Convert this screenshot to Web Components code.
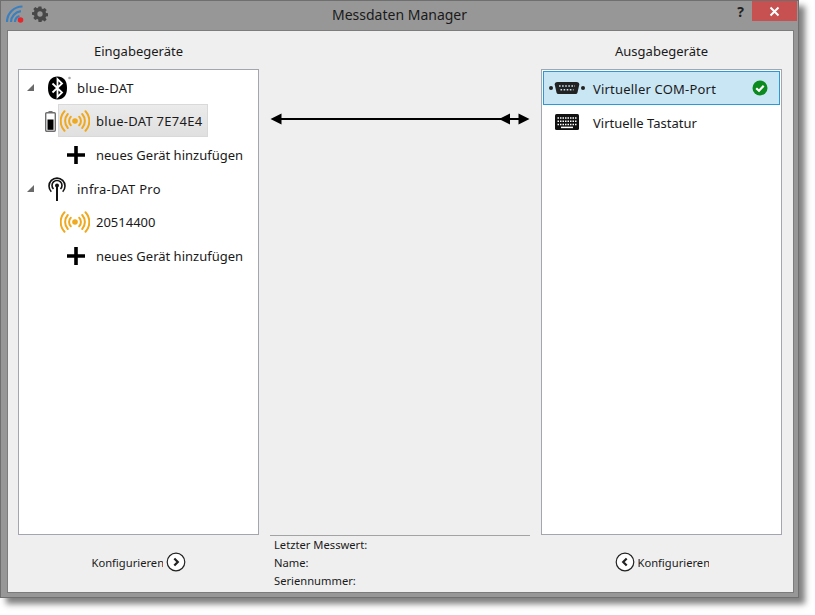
<!DOCTYPE html>
<html lang="de">
<head>
<meta charset="utf-8">
<title>Messdaten Manager</title>
<style>
  html, body { margin: 0; background: #fff; min-height: 615px; }
  body { font: 13px "Noto Sans", "Open Sans", sans-serif; color: #1a1a1a; }
</style>
</head>
<body>
<app-window caption="Messdaten Manager">
  <ui-icon slot="app" name="signal" size="18"></ui-icon>
  <ui-icon slot="app" name="gear" size="16"></ui-icon>

  <device-panel slot="left" heading="Eingabegeräte">
    <tree-row kind="group"><ui-icon slot="icon" name="bluetooth" size="24"></ui-icon>blue-DAT</tree-row>
    <tree-row kind="device" selected><ui-icon slot="lead" name="battery" size="11"></ui-icon><ui-icon slot="icon" name="wifi" size="30"></ui-icon>blue-DAT 7E74E4</tree-row>
    <tree-row kind="add"><ui-icon slot="icon" name="plus" size="18"></ui-icon>neues Gerät hinzufügen</tree-row>
    <tree-row kind="group"><ui-icon slot="icon" name="antenna" size="18"></ui-icon>infra-DAT Pro</tree-row>
    <tree-row kind="device"><ui-icon slot="icon" name="wifi" size="30"></ui-icon>20514400</tree-row>
    <tree-row kind="add"><ui-icon slot="icon" name="plus" size="18"></ui-icon>neues Gerät hinzufügen</tree-row>
    <config-link slot="footer" dir="next">Konfigurieren</config-link>
  </device-panel>

  <link-area slot="middle"></link-area>

  <device-panel slot="right" heading="Ausgabegeräte">
    <output-row selected><ui-icon slot="icon" name="serial" size="36"></ui-icon>Virtueller COM-Port<ui-icon slot="status" name="check" size="16"></ui-icon></output-row>
    <output-row><ui-icon slot="icon" name="keyboard" size="26"></ui-icon>Virtuelle Tastatur</output-row>
    <config-link slot="footer" dir="prev">Konfigurieren</config-link>
  </device-panel>
</app-window>

<script>
const ICONS = {
  signal: `<svg viewBox="0 0 18 18" fill="none" stroke="#3a80bf" stroke-width="2.200"><path d="M1 17A15.500 15.500 0 0 1 16.500 1.500"/><path d="M5 17A11 11 0 0 1 15 6.200"/><path d="M9 17A6.500 6.500 0 0 1 13.500 11"/><circle cx="14.500" cy="15" r="2.800" fill="#e8262a" stroke="none"/></svg>`,
  gear: `<svg viewBox="0 0 18 18"><path fill="#484848" fill-rule="evenodd" d="M7.400 .6h3.200l.4 2.300 1.300.6 2-1.300 2.200 2.200-1.300 2 .6 1.400 2.300.4v3.200l-2.300.4-.6 1.300 1.300 2-2.200 2.200-2-1.300-1.300.6-.4 2.300H7.400L7 15.100l-1.300-.6-2 1.300-2.200-2.200 1.300-2-.6-1.300-2.300-.4V7.100l2.300-.4.6-1.400-1.300-2 2.200-2.200 2 1.300 1.300-.6zM9 6a3 3 0 1 0 0 6 3 3 0 0 0 0-6z"/></svg>`,
  bluetooth: `<svg viewBox="0 0 24 24"><path fill="#000" d="M9.500 .5c6 0 9.500 4 9.500 11.500s-3.500 11.500-9.500 11.500S0 19.500 0 12 3.500 .5 9.500 .5z"/><path fill="none" stroke="#fff" stroke-width="1.800" d="M4.500 7.500l9.500 9-4.500 4.300V3.200l4.500 4.300-9.500 9"/><circle cx="21.500" cy="2" r="1.300" fill="#aaa"/></svg>`,
  battery: `<svg viewBox="0 0 11 21"><rect x="3.500" y="0" width="4" height="2" fill="#777"/><rect x=".7" y="1.700" width="9.600" height="18.600" rx="1" fill="#fff" stroke="#6e6e6e" stroke-width="1.400"/><rect x="2.500" y="8.500" width="6" height="10.300" fill="#000"/></svg>`,
  wifi: `<svg viewBox="0 0 30 22" fill="none" stroke="#f0a81c" stroke-width="2" stroke-linecap="round"><circle cx="15" cy="11" r="2.800" fill="#f0a81c" stroke="none"/><path d="M10.800 6.800a6 6 0 0 0 0 8.400M19.200 6.800a6 6 0 0 1 0 8.400"/><path d="M7.800 4a10.500 10.500 0 0 0 0 14M22.200 4a10.500 10.500 0 0 1 0 14"/><path d="M4.500 1.200a14.500 14.500 0 0 0 0 19.600M25.500 1.200a14.500 14.500 0 0 1 0 19.600"/></svg>`,
  plus: `<svg viewBox="0 0 18 18"><path fill="#000" d="M7.200 0h3.600v7.200H18v3.600h-7.200V18H7.200v-7.200H0V7.200h7.200z"/></svg>`,
  antenna: `<svg viewBox="0 0 18 24" fill="none" stroke="#111" stroke-width="1.600"><path d="M3.300 14.700a8 8 0 1 1 11.400 0"/><path d="M5.500 12a5 5 0 1 1 7 0"/><circle cx="9" cy="8.500" r="2" fill="#111" stroke="none"/><path d="M9 9V24" stroke-width="2"/></svg>`,
  serial: `<svg viewBox="0 0 36 14"><circle cx="2" cy="7" r="2" fill="#222"/><circle cx="34" cy="7" r="2" fill="#222"/><path fill="#222" d="M8.500 1h19c2 0 2.800 1 2.800 2.500L28.500 11.500c-.4 1.100-1 1.500-2.300 1.500H9.800c-1.300 0-1.900-.4-2.300-1.500L5.700 3.500C5.700 2 6.500 1 8.500 1z"/><path stroke="#c9e6f5" stroke-width="1.600" stroke-dasharray="1.600 1.500" d="M10 5h16M11.500 8.800h13"/></svg>`,
  keyboard: `<svg viewBox="0 0 26 18"><rect x="1" y="1" width="24" height="16" rx="1.500" fill="#111"/><path stroke="#fff" stroke-width="1.500" stroke-dasharray="1.500 1" d="M3.500 5h19M3.500 8.200h19M3.500 11.400h19"/><path stroke="#fff" stroke-width="1.500" d="M7 14.400h12"/></svg>`,
  check: `<svg viewBox="0 0 16 16"><circle cx="8" cy="8" r="7.500" fill="#0b8a1e"/><path fill="none" stroke="#fff" stroke-width="2.200" d="M4.200 8.200l2.800 2.600 4.700-5"/></svg>`,
  next: `<svg viewBox="0 0 20 20"><circle cx="10" cy="10" r="8.800" fill="#fff" stroke="#222" stroke-width="1.200"/><path fill="none" stroke="#222" stroke-width="2.200" d="M8.300 6.500L11.800 10l-3.500 3.500"/></svg>`,
  prev: `<svg viewBox="0 0 20 20"><circle cx="10" cy="10" r="8.800" fill="#fff" stroke="#222" stroke-width="1.200"/><path fill="none" stroke="#222" stroke-width="2.200" d="M11.700 6.500L8.200 10l3.500 3.500"/></svg>`
}

customElements.define("ui-icon", class extends HTMLElement {
  constructor() {
    super().attachShadow({ mode: "open" })
  }
  connectedCallback() {
    this.draw()
  }
  draw() {
    const size = this.getAttribute("size") || 16
    this.shadowRoot.innerHTML =
      `<style>:host{display:block;flex:none;line-height:0}svg{display:block;width:${size}px;height:auto}</style>` +
      (ICONS[this.getAttribute("name")] || "")
  }
})

customElements.define("app-window", class extends HTMLElement {
  constructor() {
    super().attachShadow({ mode: "open" }).innerHTML = `
      <style>
        :host{display:block;width:799px;height:598px;box-sizing:border-box;background:#979797;
          border:1px solid #6f6f6f;box-shadow:6px 6px 6px rgba(60,60,60,.65)}
        .bar{display:flex;height:29px;align-items:flex-start;position:relative}
        .apps{display:flex;gap:8px;align-items:center;padding:4px 0 0 5px;width:170px}
        .caption{position:absolute;left:0;right:0;top:4px;text-align:center;font-size:14px;line-height:20px}
        .help{margin-left:auto;margin-right:8px;padding-top:1px;font:bold 14px/20px "Noto Sans",sans-serif;color:#222}
        .close{width:45px;height:20px;margin-right:1px;background:#c75050;display:flex;align-items:center;justify-content:center}
        .client{margin:1px 5px 5px 7px;height:561px;background:#efefef;outline:1px solid #7c7c7c;
          display:grid;grid-template-columns:241px 260px 241px;column-gap:11px;padding-left:10px;box-sizing:border-box}
      </style>
      <div class="bar">
        <div class="apps"><slot name="app"></slot></div>
        <div class="caption"></div>
        <div class="help">?</div>
        <div class="close"><svg width="11" height="11" viewBox="0 0 11 11"><path stroke="#fff" stroke-width="2" d="M1.500 1.500l8 8M9.500 1.500l-8 8"/></svg></div>
      </div>
      <div class="client"><slot name="left"></slot><slot name="middle"></slot><slot name="right"></slot></div>`
  }
  connectedCallback() {
    this.shadowRoot.querySelector(".caption").textContent = this.getAttribute("caption")
  }
})

customElements.define("device-panel", class extends HTMLElement {
  constructor() {
    super().attachShadow({ mode: "open" }).innerHTML = `
      <style>
        :host{display:flex;flex-direction:column;height:561px}
        h2{margin:0;height:38px;box-sizing:border-box;padding-top:10px;font:inherit;line-height:20px;text-align:center}
        .list{height:466px;box-sizing:border-box;background:#fff;border:1px solid #a3a7ad;padding:1px}
        .foot{flex:1;display:flex;justify-content:center;padding-top:17px}
      </style>
      <h2></h2>
      <div class="list"><slot></slot></div>
      <div class="foot"><slot name="footer"></slot></div>`
  }
  connectedCallback() {
    this.shadowRoot.querySelector("h2").textContent = this.getAttribute("heading")
  }
})

customElements.define("tree-row", class extends HTMLElement {
  constructor() {
    super().attachShadow({ mode: "open" }).innerHTML = `
      <style>
        :host{display:flex;align-items:center;height:33.6px}
        .lead{flex:none;display:flex;justify-content:flex-end;align-items:center;box-sizing:border-box}
        .item{display:flex;align-items:center;height:32px;box-sizing:border-box;border:1px solid transparent;white-space:nowrap}
        .icon{flex:none;display:flex;justify-content:center}
        .arrow{width:0;height:0;border-style:solid;border-width:0 0 7px 7px;border-color:transparent transparent #6a6a6a transparent}
        :host([kind=group]){letter-spacing:.25px}
        :host([kind=group]) .lead{width:27px;justify-content:flex-start;padding-left:7px}
        :host([kind=group]) .icon{width:29px;justify-content:flex-start}
        :host([kind=device]) .lead{width:38px}
        :host([kind=device]) .lead ::slotted(ui-icon){margin-right:2px}
        :host([kind=device]) .item{padding-right:5px}
        :host([kind=device]) .icon{width:37px;box-sizing:border-box;padding-right:5px}
        :host([kind=add]) .lead{width:46px}
        :host([kind=add]) .icon{width:29px;justify-content:flex-start}
        :host([selected]){letter-spacing:.27px}
        :host([selected]) .item{height:33px;margin-bottom:1.6px;padding-top:1px;background:linear-gradient(#ebebeb,#e0e0e0);border-color:#d9d9d9}
      </style>
      <div class="lead"><slot name="lead"></slot><span class="arrow" hidden></span></div>
      <div class="item"><div class="icon"><slot name="icon"></slot></div><slot></slot></div>`
  }
  connectedCallback() {
    this.shadowRoot.querySelector(".arrow").hidden = this.getAttribute("kind") != "group"
  }
})

customElements.define("output-row", class extends HTMLElement {
  constructor() {
    super().attachShadow({ mode: "open" }).innerHTML = `
      <style>
        :host{display:flex;align-items:center;height:34px;box-sizing:border-box;border:1px solid transparent}
        :host([selected]){background:#c9e6f5;border-color:#2a9ad6;letter-spacing:.2px}
        .icon{flex:none;width:45px;margin-right:4px;display:flex;justify-content:center}
        .text{flex:1;white-space:nowrap;padding-top:1px}
        ::slotted([slot=status]){margin-right:11px}
      </style>
      <div class="icon"><slot name="icon"></slot></div>
      <div class="text"><slot></slot></div>
      <slot name="status"></slot>`
  }
})

customElements.define("config-link", class extends HTMLElement {
  constructor() {
    super().attachShadow({ mode: "open" }).innerHTML = `
      <style>
        :host{display:flex;align-items:center;gap:3px;height:20px;font-size:11.2px}
        :host([dir=prev]){flex-direction:row-reverse}
        .label{width:71px;overflow:hidden;white-space:nowrap}
      </style>
      <div class="label"><slot></slot></div>
      <ui-icon size="20"></ui-icon>`
  }
  connectedCallback() {
    const icon = this.shadowRoot.querySelector("ui-icon")
    icon.setAttribute("name", this.getAttribute("dir"))
    icon.draw()
  }
})

customElements.define("link-area", class extends HTMLElement {
  constructor() {
    super().attachShadow({ mode: "open" }).innerHTML = `
      <style>
        :host{display:flex;flex-direction:column;height:561px;font-size:11.2px}
        .arrows{margin-top:82px;height:12px;flex:none}
        .arrows svg{display:block}
        .info{margin-top:auto;height:57px;box-sizing:border-box;border-top:1px solid #a3a3a3;padding:0 0 0 4px;line-height:18px}
      </style>
      <div class="arrows">
        <svg width="260" height="12" viewBox="0 0 260 12">
          <path stroke="#000" stroke-width="2" d="M8 6h244"/>
          <path d="M.5 6l11-5.500v11zM229 6l11-5.500v11zM259.500 6l-11-5.500v11z"/>
        </svg>
      </div>
      <div class="info">
        <div>Letzter Messwert:</div>
        <div>Name:</div>
        <div>Seriennummer:</div>
      </div>`
  }
})
</script>
</body>
</html>
